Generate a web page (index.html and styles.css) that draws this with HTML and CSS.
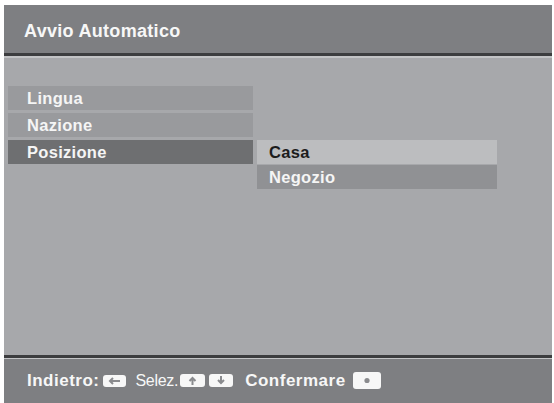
FILE: index.html
```html
<!DOCTYPE html>
<html lang="it">
<head>
<meta charset="utf-8">
<title>Avvio Automatico</title>
<link rel="stylesheet" href="styles.css">
</head>
<body>
<div class="screen">
  <header class="header"><h1 class="title">Avvio Automatico</h1></header>
  <main class="content">
    <ul class="menu">
      <li class="item">Lingua</li>
      <li class="item">Nazione</li>
      <li class="item item-active">Posizione</li>
    </ul>
    <ul class="submenu">
      <li class="sub sub-selected">Casa</li>
      <li class="sub">Negozio</li>
    </ul>
  </main>
  <footer class="footer">
    <span class="label">Indietro:</span>
    <span class="key key-back"><svg viewBox="0 0 23 12" width="23" height="12"><path d="M7 6h10M10 3L7 6l3 3" fill="none" stroke="#8a8b8e" stroke-width="2"/></svg></span>
    <span class="label label-narrow">Selez.</span>
    <span class="key key-up"><svg viewBox="0 0 25 13" width="25" height="13"><path d="M12.5 11V4M9.5 7l3-3 3 3" fill="none" stroke="#8a8b8e" stroke-width="2"/></svg></span>
    <span class="key key-down"><svg viewBox="0 0 24 13" width="24" height="13"><path d="M12 2v7M9 6l3 3 3-3" fill="none" stroke="#8a8b8e" stroke-width="2"/></svg></span>
    <span class="label label-confirm">Confermare</span>
    <span class="key key-ok"><svg viewBox="0 0 28 17" width="28" height="17"><circle cx="14" cy="8.5" r="2.6" fill="#8a8b8e"/></svg></span>
  </footer>
</div>
</body>
</html>
```
FILE: styles.css
```css
html, body {
  margin: 0;
  padding: 0;
  background: #ffffff;
}
body {
  font-family: "Liberation Sans", Arial, sans-serif;
}
.screen {
  margin: 5px 2px 0 4px;
  width: 548px;
  height: 398px;
  background: #a7a8ab;
  display: flex;
  flex-direction: column;
}
.header {
  height: 48px;
  background: #7e7f82;
  border-bottom: 3px solid #3c3d3f;
  box-shadow: 0 2px 0 #c3c4c6;
  display: flex;
  align-items: center;
  padding-left: 20px;
  box-sizing: content-box;
}
.title {
  margin: 0;
  font-size: 18px;
  font-weight: bold;
  color: #f7f7f7;
  letter-spacing: 0.3px;
  padding-top: 4px;
}
.content {
  flex: 1;
  display: flex;
  align-items: flex-start;
  gap: 4px;
  padding: 30px 0 0 4px;
}
.menu, .submenu {
  list-style: none;
  margin: 0;
  padding: 0;
  display: flex;
  flex-direction: column;
}
.menu {
  width: 245px;
  gap: 3px;
}
.submenu {
  width: 240px;
  gap: 1px;
  margin-top: 54px;
}
.item, .sub {
  height: 24px;
  display: flex;
  align-items: center;
  font-size: 16.5px;
  font-weight: bold;
  color: #f5f5f5;
  letter-spacing: 0.3px;
}
.item {
  background: #999a9d;
  padding-left: 19px;
}
.item-active {
  background: #6e6f71;
}
.sub {
  background: #909194;
  padding-left: 12px;
}
.sub-selected {
  background: #bcbdbf;
  color: #1c1c1c;
}
.footer {
  height: 45px;
  background: #7e7f82;
  border-top: 3px solid #3c3d3f;
  box-shadow: inset 0 1px 0 #c3c4c6;
  display: flex;
  align-items: center;
  padding-left: 23px;
}
.label {
  font-size: 17px;
  font-weight: bold;
  color: #f7f7f7;
  letter-spacing: 0.5px;
}
.label-narrow {
  font-size: 16px;
  font-weight: normal;
  letter-spacing: -0.3px;
  margin-left: 10px;
}
.label-confirm {
  margin-left: 12px;
}
.key {
  display: inline-flex;
  background: #f7f7f7;
  border-radius: 3px;
  margin-left: 3px;
}
.key svg {
  display: block;
}
.key-up {
  margin-left: 2px;
}
.key-down {
  margin-left: 4px;
}
.key-ok {
  margin-left: 7px;
}
```
